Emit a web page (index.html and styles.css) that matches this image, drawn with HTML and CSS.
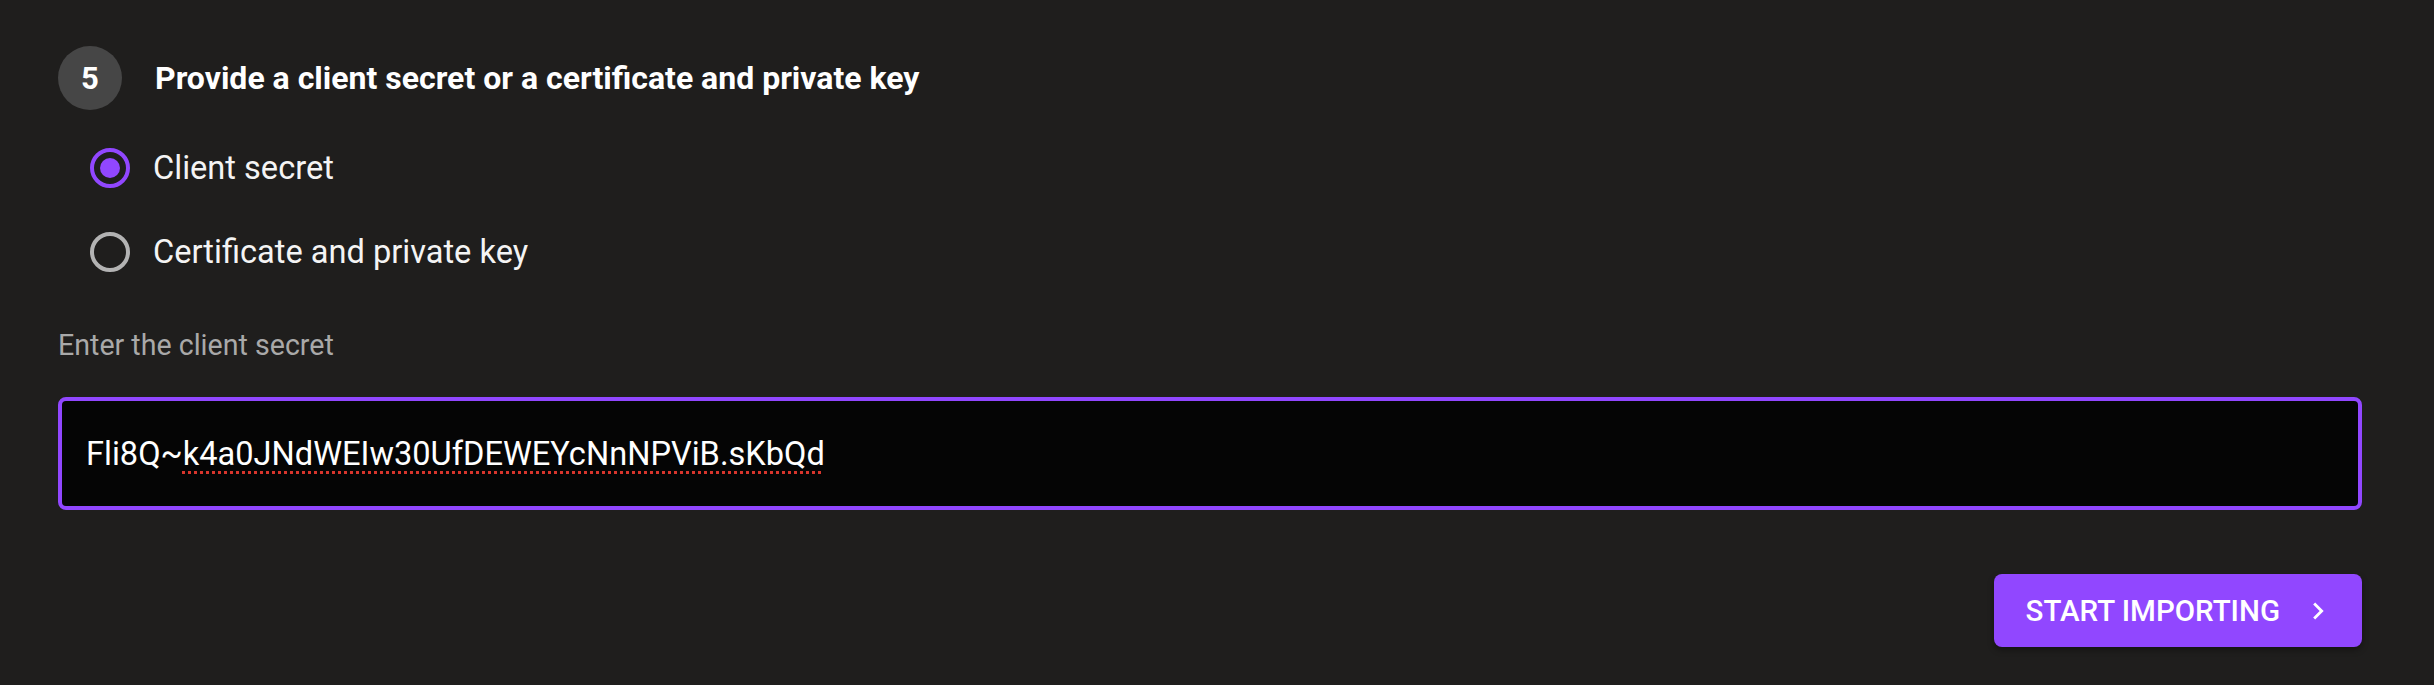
FILE: index.html
```html
<!DOCTYPE html>
<html lang="en">
<head>
<meta charset="utf-8">
<title>Import</title>
<link rel="stylesheet" href="styles.css">
</head>
<body>
<main class="step">
  <div class="step-head">
    <div class="step-num">5</div>
    <h2 class="step-title">Provide a client secret or a certificate and private key</h2>
  </div>
  <div class="radios">
    <label class="radio-row">
      <span class="radio radio-on"><span class="radio-dot"></span></span>
      <span class="radio-label">Client secret</span>
    </label>
    <label class="radio-row">
      <span class="radio"></span>
      <span class="radio-label">Certificate and private key</span>
    </label>
  </div>
  <div class="field-label">Enter the client secret</div>
  <div class="field">
    <span class="field-text">Fli8Q~<span class="misspelled">k4a0JNdWEIw30UfDEWEYcNnNPViB.sKbQd</span></span>
  </div>
  <div class="actions">
    <button class="btn-primary" type="button">
      <span class="btn-text">START IMPORTING</span>
      <svg class="btn-icon" viewBox="0 0 24 24" aria-hidden="true"><path d="M10 6L8.59 7.41 13.17 12l-4.58 4.59L10 18l6-6z" fill="#fff"/></svg>
    </button>
  </div>
</main>
</body>
</html>
```

FILE: styles.css
```css
html, body {
  margin: 0;
  padding: 0;
  background: #1f1e1d;
  height: 100%;
}
body {
  font-family: Roboto, "Noto Sans", sans-serif;
  color: #fff;
}
.step {
  display: flex;
  flex-direction: column;
  padding: 46px 72px 0 58px;
}
.step-head {
  display: flex;
  align-items: center;
  gap: 33px;
  height: 64px;
}
.step-num {
  width: 64px;
  height: 64px;
  border-radius: 50%;
  background: #464646;
  display: flex;
  align-items: center;
  justify-content: center;
  font-size: 31px;
  font-weight: 700;
  color: #fff;
}
.step-title {
  margin: 0;
  font-size: 32px;
  font-weight: 700;
  color: #fff;
}
.radios {
  display: flex;
  flex-direction: column;
  margin-top: 16px;
  padding-left: 32px;
}
.radio-row {
  display: flex;
  align-items: center;
  height: 84px;
  gap: 23px;
}
.radio {
  box-sizing: border-box;
  width: 40px;
  height: 40px;
  border-radius: 50%;
  border: 4px solid #b3b3b3;
  display: flex;
  align-items: center;
  justify-content: center;
}
.radio-on {
  border-color: #9147ff;
}
.radio-dot {
  width: 20px;
  height: 20px;
  border-radius: 50%;
  background: #9147ff;
}
.radio-label {
  font-size: 32.6px;
  color: #f4f4f4;
}
.field-label {
  margin-top: 31px;
  font-size: 28.6px;
  line-height: 40px;
  color: #a9a9a9;
}
.field {
  box-sizing: border-box;
  margin-top: 32px;
  height: 113px;
  border: 4px solid #9147ff;
  border-radius: 8px;
  background: #050505;
  display: flex;
  align-items: center;
  padding: 0 24px;
}
.field-text {
  font-size: 32.6px;
  color: #fff;
}
.misspelled {
  text-decoration: underline dotted #d8352c;
  text-decoration-thickness: 2.5px;
  text-underline-offset: 6px;
}
.actions {
  display: flex;
  justify-content: flex-end;
  margin-top: 64px;
}
.btn-primary {
  display: flex;
  align-items: center;
  gap: 21px;
  height: 73px;
  padding: 0 27px 0 32px;
  border: 0;
  border-radius: 8px;
  background: #9147ff;
  box-shadow: 0 3px 6px rgba(0, 0, 0, 0.35);
  color: #fff;
  font-family: Roboto, "Noto Sans", sans-serif;
  font-size: 29.5px;
  font-weight: 500;
  letter-spacing: 0;
}
.btn-icon {
  width: 34px;
  height: 34px;
}
```
